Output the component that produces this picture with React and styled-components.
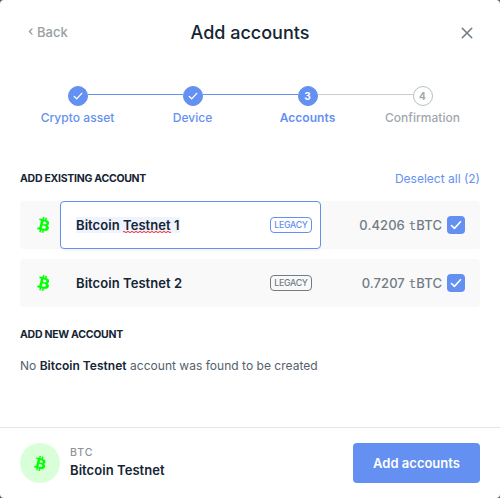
import React from 'react';
import styled, { createGlobalStyle } from 'styled-components';

const Global = createGlobalStyle`
  * { box-sizing: border-box; }
  body { margin: 0; background: #555; font-family: Inter, "DejaVu Sans Mono", sans-serif; color: #142533; }
`;

const Modal = styled.main`
  width: 500px;
  height: 498px;
  display: flex;
  flex-direction: column;
  background: #fff;
  border-radius: 4px;
  overflow: hidden;
`;
const Header = styled.header`
  height: 66px;
  padding: 0 25px 0 28px;
  display: grid;
  grid-template-columns: 80px 1fr 83px;
  align-items: center;
`;
const Back = styled.button`
  display: flex;
  align-items: center;
  gap: 4px;
  padding: 0 0 3px;
  border: 0;
  background: none;
  font: 500 13px/16px Inter, sans-serif;
  color: #999fa5;
`;
const Title = styled.h1`
  margin: 0;
  text-align: center;
  font-size: 18px;
  font-weight: 500;
  line-height: 22px;
`;
const Close = styled.button`
  justify-self: end;
  display: flex;
  padding: 0;
  border: 0;
  background: none;
  color: #727c85;
`;
const Stepper = styled.ol`
  list-style: none;
  margin: 20px 20px 0;
  padding: 0;
  display: grid;
  grid-template-columns: repeat(4, 115px);
  height: 40px;
`;
const Step = styled.li`
  display: grid;
  grid-template-columns: 1fr 20px 1fr;
  grid-template-rows: 20px 1fr;
`;
const Line = styled.span`
  height: 1px;
  margin-top: 8px;
  background: ${(p) => (p.$hidden ? 'transparent' : p.$active ? '#6490f1' : '#cccccc')};
`;
const Dot = styled.span`
  width: 20px;
  height: 20px;
  border-radius: 50%;
  display: flex;
  align-items: center;
  justify-content: center;
  font-size: 10px;
  font-weight: 700;
  color: ${(p) => (p.$active ? '#fff' : '#a1a8ad')};
  background: ${(p) => (p.$active ? '#6490f1' : '#fff')};
  border: 1px solid ${(p) => (p.$active ? '#6490f1' : '#b9bec2')};
`;
const StepLabel = styled.span`
  grid-column: 1 / -1;
  text-align: center;
  padding-top: 4px;
  font-size: 12px;
  line-height: 15px;
  letter-spacing: 0.04px;
  font-weight: ${(p) => (p.$current ? 600 : 500)};
  color: ${(p) => (p.$active ? '#6490f1' : '#a1a8ad')};
`;
const Body = styled.section`
  flex: 1;
  padding: 44px 20px 0;
`;
const SectionHead = styled.div`
  display: flex;
  justify-content: space-between;
  align-items: center;
  height: 18px;
  margin-bottom: 13px;
`;
const SectionTitle = styled.h2`
  margin: 0;
  font-size: 10.5px;
  line-height: 18px;
  font-weight: 700;
  letter-spacing: -0.27px;
`;
const Deselect = styled.button`
  padding: 0;
  border: 0;
  background: none;
  font: 400 12px/18px Inter, sans-serif;
  color: #6490f1;
`;
const Row = styled.div`
  height: 48px;
  margin-bottom: 10px;
  padding-right: 15px;
  display: flex;
  align-items: center;
  background: #f9f9f9;
  border-radius: 4px;
`;
const IconCell = styled.span`
  width: 40px;
  padding-left: 17px;
  display: flex;
`;
const Field = styled.div`
  width: 261px;
  height: 48px;
  padding: 0 8px 0 15px;
  display: flex;
  align-items: center;
  justify-content: space-between;
  border-radius: 4px;
  border: 1px solid ${(p) => (p.$editing ? '#6490f1' : 'transparent')};
  background: ${(p) => (p.$editing ? '#fff' : 'transparent')};
  box-shadow: ${(p) => (p.$editing ? '0 2px 2px rgba(0,0,0,.04)' : 'none')};
`;
const Name = styled.span`
  font-size: 13px;
  line-height: 16px;
  font-weight: 600;
  letter-spacing: 0.06px;
  background: ${(p) => (p.$selected ? '#eff3fd' : 'transparent')};
`;
/* Two offset rows of dashes make the spell-checker squiggle. */
const Misspelled = styled.span`
  background:
    repeating-linear-gradient(90deg, #f0505c 0 2px, #f9c3ca 2px 4px) 0 calc(100% - 1px) / 100% 1px no-repeat,
    repeating-linear-gradient(90deg, #f9c3ca 0 2px, #f0505c 2px 4px) 0 100% / 100% 1px no-repeat;
`;
const Badge = styled.span`
  width: 42px;
  height: 16px;
  display: flex;
  align-items: center;
  justify-content: center;
  border: 1px solid currentColor;
  border-radius: 4px;
  font-size: 8.8px;
  font-weight: 500;
  line-height: 14px;
  letter-spacing: -0.3px;
  color: ${(p) => (p.$editing ? '#6490f1' : '#727c85')};
`;
const Balance = styled.span`
  flex: 1;
  text-align: right;
  padding-right: 5px;
  font-size: 13px;
  line-height: 16px;
  font-weight: 500;
  letter-spacing: 0.08px;
  color: #727c85;
  white-space: nowrap;
`;
const Check = styled.span`
  width: 18px;
  height: 18px;
  display: flex;
  align-items: center;
  justify-content: center;
  border-radius: 4px;
  background: #6490f1;
`;
const NewTitle = styled(SectionTitle)`
  margin-top: 19px;
`;
const Note = styled.p`
  margin: 13px 0 0;
  font-size: 12px;
  line-height: 18px;
  letter-spacing: 0.025px;
  color: #54616c;
  b { font-weight: 600; color: #142533; }
`;
const Footer = styled.footer`
  height: 71px;
  padding: 0 20px;
  border-top: 1px solid #e4e5e6;
  display: flex;
  align-items: center;
`;
const Coin = styled.span`
  width: 40px;
  height: 40px;
  border-radius: 50%;
  display: flex;
  align-items: center;
  justify-content: center;
  background: #d9ffd9;
`;
const Asset = styled.div`
  flex: 1;
  margin: -1px 0 0 10px;
  font-size: 13px;
  font-weight: 600;
  line-height: 16px;
  letter-spacing: 0.06px;
`;
const Ticker = styled.div`
  font-size: 10.5px;
  font-weight: 500;
  line-height: 12px;
  letter-spacing: 0.9px;
  color: #8a939a;
  margin-bottom: 3px;
`;
const Submit = styled.button`
  width: 127px;
  height: 40px;
  padding: 0;
  border: 0;
  border-radius: 4px;
  background: #6490f1;
  color: #fff;
  font: 600 13px/16px Inter, sans-serif;
`;

const Bitcoin = ({ size = 16 }) => (
  <svg width={size * 0.78} height={size} viewBox="8 6 15.6 20" fill="#00ff00" stroke="#00ff00" strokeWidth="0.25">
    <path d="M23.189 14.02c.314-2.096-1.283-3.223-3.465-3.975l.708-2.84-1.728-.43-.69 2.765c-.454-.114-.92-.22-1.385-.326l.695-2.783L15.596 6l-.708 2.839c-.376-.086-.746-.17-1.104-.26l.002-.009-2.384-.595-.46 1.846s1.283.294 1.256.312c.7.175.826.638.805 1.006l-.806 3.235c.048.012.11.03.18.057l-.183-.045-1.13 4.532c-.086.212-.303.531-.793.41.018.025-1.256-.313-1.256-.313l-.858 1.978 2.25.561c.418.105.828.215 1.231.318l-.715 2.872 1.727.43.708-2.84c.472.127.93.245 1.378.357l-.706 2.828 1.728.43.715-2.866c2.948.558 5.164.333 6.097-2.333.752-2.146-.037-3.385-1.588-4.192 1.13-.26 1.98-1.003 2.207-2.538zm-3.95 5.538c-.533 2.147-4.148.986-5.32.695l.95-3.805c1.172.293 4.929.872 4.37 3.11zm.535-5.569c-.487 1.953-3.495.96-4.47.717l.86-3.45c.975.243 4.118.696 3.61 2.733z" />
  </svg>
);
const Tick = ({ size = 12, weight = 1.6 }) => (
  <svg width={size} height={size} viewBox="0 0 12 12" fill="none" stroke="#fff" strokeWidth={weight} strokeLinecap="round" strokeLinejoin="round">
    <path d="M1.5 6.5 4.4 9.4 10.5 2.8" />
  </svg>
);

const steps = ['Crypto asset', 'Device', 'Accounts', 'Confirmation'];
const accounts = [
  { index: '1', balance: '0.4206', editing: true },
  { index: '2', balance: '0.7207', editing: false },
];
const current = 2;

export default function App() {
  return (
    <>
      <Global />
      <Modal>
        <Header>
          <Back>
            <svg width="5" height="7" viewBox="0 0 5 7" fill="none" stroke="#8f989e" strokeWidth="1.2" strokeLinecap="round" strokeLinejoin="round">
              <path d="M4 .8 1.4 3.5 4 6.2" />
            </svg>
            Back
          </Back>
          <Title>Add accounts</Title>
          <Close aria-label="Close">
            <svg width="16" height="16" viewBox="0 0 16 16" fill="none" stroke="currentColor" strokeWidth="1.6" strokeLinecap="round">
              <path d="m3.3 3.3 9.4 9.4m0-9.4-9.4 9.4" />
            </svg>
          </Close>
        </Header>
        <Stepper>
          {steps.map((label, i) => (
            <Step key={label}>
              <Line $hidden={i === 0} $active={i <= current} />
              <Dot $active={i <= current}>{i < current ? <Tick size={10} weight={1.6} /> : i + 1}</Dot>
              <Line $hidden={i === 3} $active={i < current} />
              <StepLabel $active={i <= current} $current={i === current}>{label}</StepLabel>
            </Step>
          ))}
        </Stepper>
        <Body>
          <SectionHead>
            <SectionTitle>ADD EXISTING ACCOUNT</SectionTitle>
            <Deselect>Deselect all (2)</Deselect>
          </SectionHead>
          {accounts.map(({ index, balance, editing }) => (
            <Row key={index}>
              <IconCell><Bitcoin /></IconCell>
              <Field $editing={editing}>
                <Name $selected={editing}>
                  Bitcoin {editing ? <Misspelled>Testnet</Misspelled> : 'Testnet'} {index}
                </Name>
                <Badge $editing={editing}>LEGACY</Badge>
              </Field>
              <Balance>{balance} 𝚝BTC</Balance>
              <Check><Tick /></Check>
            </Row>
          ))}
          <NewTitle>ADD NEW ACCOUNT</NewTitle>
          <Note>No <b>Bitcoin Testnet</b> account was found to be created</Note>
        </Body>
        <Footer>
          <Coin><Bitcoin size={15} /></Coin>
          <Asset>
            <Ticker>BTC</Ticker>
            Bitcoin Testnet
          </Asset>
          <Submit>Add accounts</Submit>
        </Footer>
      </Modal>
    </>
  );
}
